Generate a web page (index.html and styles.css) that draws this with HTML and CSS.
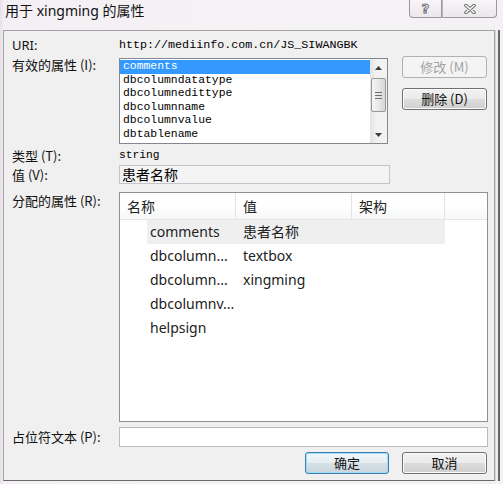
FILE: index.html
```html
<!DOCTYPE html>
<html lang="zh-CN">
<head>
<meta charset="utf-8">
<title>用于 xingming 的属性</title>
<link rel="stylesheet" href="styles.css">
</head>
<body>
<div class="window">
  <div class="titlebar">
    <span class="title">用于 xingming 的属性</span>
    <div class="caption">
      <span class="cap help"><span class="qmark">?</span></span>
      <span class="cap close">
        <svg width="12" height="10" viewBox="0 0 12 10">
          <path d="M2 1.5 L10 8.5 M10 1.5 L2 8.5" stroke="#6f6f6f" stroke-width="3.6" stroke-linecap="round" fill="none"/>
          <path d="M2 1.5 L10 8.5 M10 1.5 L2 8.5" stroke="#ffffff" stroke-width="1.6" stroke-linecap="round" fill="none"/>
        </svg>
      </span>
    </div>
  </div>
  <div class="panel">
    <div class="row row-uri">
      <span class="label latin">URI:</span>
      <span class="mono uri">http://mediinfo.com.cn/JS_SIWANGBK</span>
    </div>
    <div class="row row-attrs">
      <span class="label">有效的属性 (<u>I</u>):</span>
      <div class="listbox">
        <div class="items">
          <div class="item selected">comments</div>
          <div class="item">dbcolumndatatype</div>
          <div class="item">dbcolumnedittype</div>
          <div class="item">dbcolumnname</div>
          <div class="item">dbcolumnvalue</div>
          <div class="item">dbtablename</div>
        </div>
        <div class="scrollbar">
          <div class="arrow"><svg width="7" height="4" viewBox="0 0 7 4"><path d="M0 4 L3.5 0 L7 4 Z" fill="#3d3d3d"/></svg></div>
          <div class="track">
            <div class="thumb"><span class="grip"></span><span class="grip"></span><span class="grip"></span></div>
          </div>
          <div class="arrow"><svg width="7" height="4" viewBox="0 0 7 4"><path d="M0 0 L3.5 4 L7 0 Z" fill="#3d3d3d"/></svg></div>
        </div>
      </div>
      <div class="side-buttons">
        <span class="btn disabled">修改 (<u>M</u>)</span>
        <span class="btn">删除 (<u>D</u>)</span>
      </div>
    </div>
    <div class="row row-type">
      <span class="label">类型 (<u>T</u>):</span>
      <span class="mono">string</span>
    </div>
    <div class="row row-value">
      <span class="label">值 (<u>V</u>):</span>
      <div class="textbox readonly">患者名称</div>
    </div>
    <div class="row row-assigned">
      <span class="label">分配的属性 (<u>R</u>):</span>
      <div class="listview">
        <div class="lv-header">
          <span class="hcell">名称</span>
          <span class="hcell">值</span>
          <span class="hcell">架构</span>
          <span class="hcell last"></span>
        </div>
        <div class="lv-row"><div class="cells hot"><span class="c-name">comments</span><span class="c-val">患者名称</span></div></div>
        <div class="lv-row"><div class="cells"><span class="c-name">dbcolumn...</span><span class="c-val">textbox</span></div></div>
        <div class="lv-row"><div class="cells"><span class="c-name">dbcolumn...</span><span class="c-val">xingming</span></div></div>
        <div class="lv-row"><div class="cells"><span class="c-name">dbcolumnv...</span><span class="c-val"></span></div></div>
        <div class="lv-row"><div class="cells"><span class="c-name">helpsign</span><span class="c-val"></span></div></div>
      </div>
    </div>
    <div class="row row-placeholder">
      <span class="label">占位符文本 (<u>P</u>):</span>
      <div class="textbox"></div>
    </div>
    <div class="row row-buttons">
      <span class="btn default">确定</span>
      <span class="btn">取消</span>
    </div>
  </div>
</div>
</body>
</html>
```
FILE: styles.css
```css
html, body {
  margin: 0;
  padding: 0;
}
body {
  width: 503px;
  height: 484px;
  overflow: hidden;
  background: linear-gradient(to right, #e8dfe9 0, #f3eff4 4px, #f6f3f6 60%, #f4f1f4 100%);
  font-family: "Noto Sans CJK SC", "Noto Sans", sans-serif;
  color: #000;
}
.window {
  width: 503px;
  height: 484px;
  display: flex;
  flex-direction: column;
}
.titlebar {
  height: 30px;
  display: flex;
  justify-content: space-between;
  align-items: flex-start;
  flex: none;
}
.title {
  padding-left: 5px;
  margin-top: 2px;
  font-family: "Noto Sans", "Noto Sans CJK SC", sans-serif;
  font-size: 14px;
  line-height: 18px;
  color: #111;
}
.caption {
  display: flex;
  margin-right: 6px;
}
.cap {
  height: 18px;
  box-sizing: border-box;
  border: 1px solid #9a9a9a;
  border-top: none;
  background: linear-gradient(#f7f5f7, #ebe8ec);
  display: flex;
  align-items: center;
  justify-content: center;
}
.help {
  width: 33px;
  border-radius: 0 0 0 4px;
}
.close {
  width: 55px;
  border-left: 1px solid #b5b5b5;
  border-radius: 0 0 4px 0;
}
.qmark {
  font-family: "DejaVu Sans", sans-serif;
  font-weight: bold;
  font-size: 13px;
  line-height: 13px;
  color: #fff;
  -webkit-text-stroke: 1px #6f6f6f;
}
.panel {
  margin-left: 3px;
  width: 492px;
  height: 451px;
  box-sizing: border-box;
  border: 1px solid #a3a3a3;
  border-bottom-color: #6a6a6a;
  background: #f0f0f0;
  display: flex;
  flex-direction: column;
  box-shadow: 1px 0 0 #d4d4d4, 3px 0 0 #eeeeee, 5px 0 0 #666666;
}
.row {
  display: flex;
  flex: none;
}
.label {
  width: 115px;
  flex: none;
  box-sizing: border-box;
  padding-left: 8px;
  font-size: 13px;
  line-height: 13px;
  color: #111;
  white-space: nowrap;
}
.label.latin {
  font-family: "Noto Sans", sans-serif;
}
u {
  text-decoration: none;
}
.mono {
  font-family: "Liberation Mono", monospace;
  font-size: 11.25px;
  line-height: 13px;
}
.uri {
  font-size: 11.7px;
}
.row-uri {
  margin-top: 8px;
  height: 13px;
}
.row-attrs {
  margin-top: 6px;
  height: 86px;
}
.listbox {
  width: 269px;
  height: 86px;
  box-sizing: border-box;
  border: 1px solid #828790;
  background: #fff;
  display: flex;
}
.items {
  flex: 1;
  padding-top: 1px;
}
.item {
  font-family: "Liberation Mono", monospace;
  font-size: 11.4px;
  line-height: 13.6px;
  height: 13.6px;
  padding-left: 3px;
  color: #000;
}
.item.selected {
  background: #3399ff;
  color: #fff;
}
.scrollbar {
  width: 17px;
  flex: none;
  display: flex;
  flex-direction: column;
  background: linear-gradient(to right, #e3e3e3, #f2f2f2 40%, #f2f2f2);
}
.arrow {
  height: 17px;
  flex: none;
  display: flex;
  align-items: center;
  justify-content: center;
}
.track {
  flex: 1;
  padding-top: 2px;
}
.thumb {
  margin: 0 1px;
  height: 34px;
  box-sizing: border-box;
  border: 1px solid #979797;
  border-radius: 2px;
  background: linear-gradient(to right, #f5f5f5, #e8e8e8 50%, #d6d6d6);
  display: flex;
  flex-direction: column;
  align-items: center;
  justify-content: center;
  gap: 2px;
}
.grip {
  width: 7px;
  height: 1px;
  background: #6e6e6e;
}
.side-buttons {
  margin-left: 14px;
  margin-top: -2px;
  display: flex;
  flex-direction: column;
  gap: 10px;
}
.btn {
  width: 85px;
  height: 22px;
  box-sizing: border-box;
  border: 1px solid #707070;
  border-radius: 3px;
  background: linear-gradient(#f2f2f2 0%, #ebebeb 48%, #dddddd 52%, #cfcfcf 100%);
  box-shadow: inset 0 0 0 1px #fbfbfb;
  font-size: 13px;
  line-height: 20px;
  text-align: center;
  color: #111;
  white-space: nowrap;
}
.btn.disabled {
  border-color: #adb2b5;
  background: #f4f4f4;
  box-shadow: none;
  color: #a3a3a3;
}
.btn.default {
  width: 84px;
  border-color: #3c7fb1;
  box-shadow: inset 0 0 0 1px #9fdcf6;
  background: linear-gradient(#f1f6f9 0%, #e6eef3 48%, #d6e0e7 52%, #c9d4dc 100%);
}
.row-type {
  margin-top: 5px;
  height: 13px;
}
.row-value {
  margin-top: 3px;
  height: 19px;
}
.row-value .label {
  line-height: 19px;
}
.textbox {
  height: 19px;
  box-sizing: border-box;
  border: 1px solid #b9bbc0;
  background: #fff;
  font-size: 14px;
  line-height: 17px;
  padding-left: 2px;
}
.textbox.readonly {
  width: 271px;
  background: #f4f4f4;
  border-color: #c3c5c8;
}
.row-assigned {
  margin-top: 8px;
  height: 230px;
}
.row-assigned .label {
  padding-top: 2px;
}
.listview {
  width: 369px;
  height: 230px;
  box-sizing: border-box;
  border: 1px solid #8e9197;
  background: #fff;
}
.lv-header {
  height: 27px;
  box-sizing: border-box;
  display: grid;
  grid-template-columns: 116px 116px 93px 1fr;
  border-bottom: 1px solid #e3e4e6;
  background: linear-gradient(#ffffff, #ffffff 50%, #f6f7f8);
}
.hcell {
  border-right: 1px solid #e3e4e6;
  padding-left: 7px;
  font-size: 14px;
  line-height: 26px;
  color: #222;
}
.hcell.last {
  border-right: none;
}
.lv-row {
  height: 24px;
  padding-left: 27px;
}
.cells {
  width: 298px;
  height: 24px;
  display: grid;
  grid-template-columns: 88px 1fr;
  font-family: "Noto Sans", "Noto Sans CJK SC", sans-serif;
  font-size: 14px;
  line-height: 24px;
  color: #222;
}
.cells.hot {
  background: #efefef;
}
.c-name {
  padding-left: 3px;
  white-space: nowrap;
}
.c-val {
  padding-left: 8px;
  white-space: nowrap;
}
.row-placeholder {
  margin-top: 5px;
  height: 20px;
}
.row-placeholder .label {
  line-height: 20px;
}
.row-placeholder .textbox {
  width: 369px;
  height: 20px;
}
.row-buttons {
  margin-top: 5px;
  justify-content: flex-end;
  padding-right: 7px;
  gap: 13px;
}
```
